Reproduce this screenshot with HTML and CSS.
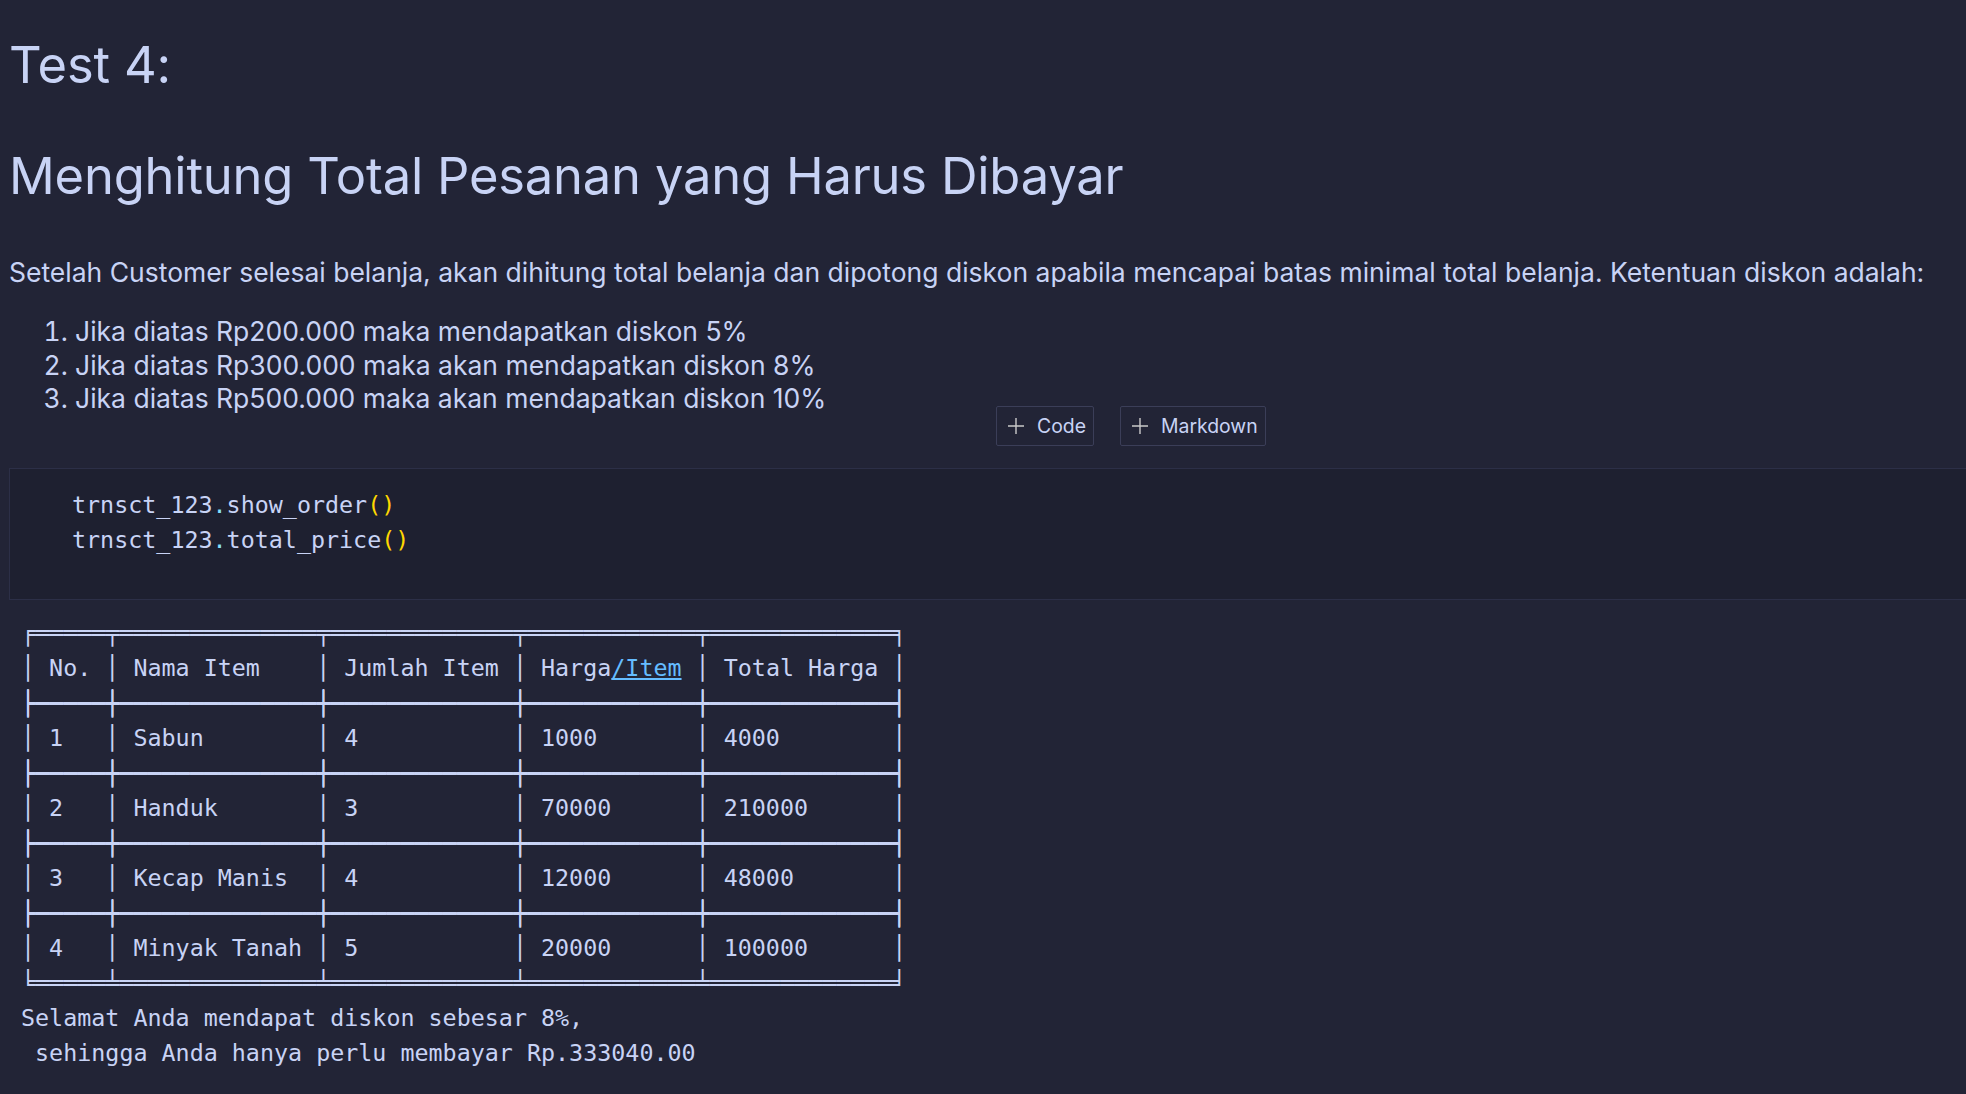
FILE: index.html
```html
<!DOCTYPE html>
<html lang="id">
<head>
<meta charset="utf-8">
<title>Test 4</title>
<link rel="stylesheet" href="styles.css">
</head>
<body>
<main class="notebook">
  <section class="md-cell">
    <h2 class="md-h md-h-first">Test 4:</h2>
    <h2 class="md-h md-h-second">Menghitung Total Pesanan yang Harus Dibayar</h2>
    <p class="md-p">Setelah Customer selesai belanja, akan dihitung total belanja dan dipotong diskon apabila mencapai batas minimal total belanja. Ketentuan diskon adalah:</p>
    <ol class="md-list">
      <li>Jika diatas Rp200.000 maka mendapatkan diskon 5%</li>
      <li>Jika diatas Rp300.000 maka akan mendapatkan diskon 8%</li>
      <li>Jika diatas Rp500.000 maka akan mendapatkan diskon 10%</li>
    </ol>
  </section>

  <div class="insert-bar">
    <button class="insert-btn"><svg class="plus" viewBox="0 0 18 18" width="18" height="18"><path d="M9 1V17M1 9H17" stroke="currentColor" stroke-width="1.4" fill="none"/></svg><span>Code</span></button>
    <button class="insert-btn"><svg class="plus" viewBox="0 0 18 18" width="18" height="18"><path d="M9 1V17M1 9H17" stroke="currentColor" stroke-width="1.4" fill="none"/></svg><span>Markdown</span></button>
  </div>

  <section class="code-cell">
<pre class="code">trnsct_123<span class="tok-dot">.</span>show_order<span class="tok-paren">()</span>
trnsct_123<span class="tok-dot">.</span>total_price<span class="tok-paren">()</span></pre>
  </section>

<pre class="output">╒═════╤══════════════╤═════════════╤════════════╤═════════════╕
│ No. │ Nama Item    │ Jumlah Item │ Harga<span class="link">/Item</span> │ Total Harga │
<span class="rule">├─────┼──────────────┼─────────────┼────────────┼─────────────┤</span>
│ 1   │ Sabun        │ 4           │ 1000       │ 4000        │
<span class="rule">├─────┼──────────────┼─────────────┼────────────┼─────────────┤</span>
│ 2   │ Handuk       │ 3           │ 70000      │ 210000      │
<span class="rule">├─────┼──────────────┼─────────────┼────────────┼─────────────┤</span>
│ 3   │ Kecap Manis  │ 4           │ 12000      │ 48000       │
<span class="rule">├─────┼──────────────┼─────────────┼────────────┼─────────────┤</span>
│ 4   │ Minyak Tanah │ 5           │ 20000      │ 100000      │
╘═════╧══════════════╧═════════════╧════════════╧═════════════╛
Selamat Anda mendapat diskon sebesar 8%,
 sehingga Anda hanya perlu membayar Rp.333040.00</pre>
</main>
</body>
</html>
```

FILE: styles.css
```css
html, body {
  margin: 0;
  padding: 0;
  background: #222436;
  color: #c8d3f5;
  overflow: hidden;
}

.notebook {
  padding-left: 9px;
  font-family: Inter, "Noto Sans", sans-serif;
}

.md-cell {
  display: flex;
  flex-direction: column;
}

.md-h {
  margin: 0;
  font-weight: 400;
  font-size: 50.7px;
  line-height: 60px;
  color: #c8d3f5;
  letter-spacing: -0.2px;
}

.md-h-first {
  margin-top: 35px;
}

.md-h-second {
  margin-top: 51px;
}

.md-p {
  margin: 49px 0 0;
  font-size: 26.5px;
  line-height: 34px;
}

.md-list {
  margin: 26px 0 0;
  padding-left: 66px;
  font-size: 26.5px;
  line-height: 33.5px;
}

.insert-bar {
  display: flex;
  gap: 26px;
  margin-top: -10px;
  padding-left: 987px;
  height: 40px;
}

.insert-btn {
  display: flex;
  align-items: center;
  gap: 12px;
  height: 40px;
  padding: 0 7px 0 10px;
  background: #222436;
  border: 1px solid #3b3e58;
  border-radius: 2px;
  color: #c8d3f5;
  font-family: Inter, "Noto Sans", sans-serif;
  font-size: 19.4px;
}

.plus {
  color: #c9c9c9;
  flex: none;
}

.code-cell {
  margin-top: 22px;
  background: #1e2030;
  border: 1px solid #2c2f47;
  border-right: none;
  padding: 19px 0 41px 62px;
}

.code, .output {
  margin: 0;
  font-family: "DejaVu Sans Mono", "Liberation Mono", monospace;
  font-size: 23.35px;
  line-height: 35px;
  color: #c8d3f5;
}

.tok-dot {
  color: #86e1fc;
}

.tok-paren {
  color: #ffd700;
}

.output {
  margin-top: 16px;
  margin-left: 12px;
}

.rule {
  text-shadow: 0 0.9px 0 #c8d3f5;
}

.link {
  color: #65bcff;
  text-decoration: underline;
}
```
